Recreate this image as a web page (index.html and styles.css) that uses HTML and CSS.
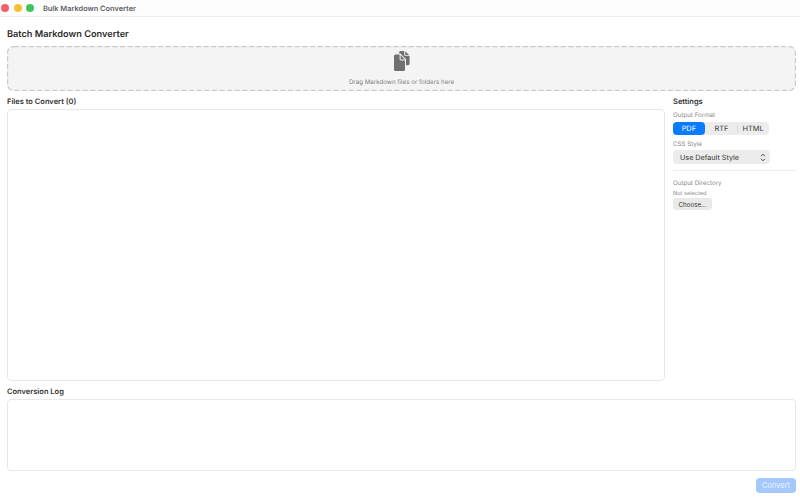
FILE: index.html
```html
<!DOCTYPE html>
<html lang="en">
<head>
<meta charset="utf-8">
<title>Bulk Markdown Converter</title>
<link rel="stylesheet" href="styles.css">
</head>
<body>
<div class="window">
  <header class="titlebar">
    <div class="lights">
      <span class="light red"></span>
      <span class="light yellow"></span>
      <span class="light green"></span>
    </div>
    <span class="window-title">Bulk Markdown Converter</span>
  </header>
  <main class="content">
    <h1 class="heading">Batch Markdown Converter</h1>
    <section class="dropzone">
      <svg class="dash" width="789" height="45" viewBox="0 0 789 45">
        <rect x="0.6" y="0.6" width="787.8" height="43.8" rx="6" fill="none" stroke="#c9c9c9" stroke-width="1.2" stroke-dasharray="5 2.6"/>
      </svg>
      <svg class="drop-icon" width="16" height="20" viewBox="0 0 16 20">
        <path fill="#707070" d="M6.6 0H10.2V3.6a1.5 1.5 0 0 0 1.5 1.5H15.6V12.8a1.4 1.4 0 0 1-1.4 1.4H12V8.2L6.4 2.4H5.2V1.4A1.4 1.4 0 0 1 6.6 0Z"/>
        <path fill="#707070" d="M11.2 .3L15.3 4.2H11.2Z"/>
        <path fill="#707070" d="M1.5 3.6H5.6V8a1.6 1.6 0 0 0 1.6 1.6H11V18.5A1.5 1.5 0 0 1 9.5 20H1.5A1.5 1.5 0 0 1 0 18.5V5.1A1.5 1.5 0 0 1 1.5 3.6Z"/>
        <path fill="#707070" d="M6.6 3.9L10.8 8.5H6.6Z"/>
      </svg>
      <span class="drop-text">Drag Markdown files or folders here</span>
    </section>
    <div class="middle">
      <section class="files">
        <h2 class="section-title">Files to Convert (0)</h2>
        <div class="panel files-panel"></div>
      </section>
      <aside class="settings">
        <h2 class="section-title">Settings</h2>
        <label class="field-label first">Output Format</label>
        <div class="segments">
          <span class="segment active">PDF</span>
          <span class="segment rtf">RTF</span>
          <span class="divider"></span>
          <span class="segment">HTML</span>
        </div>
        <label class="field-label css-label">CSS Style</label>
        <div class="select">
          <span>Use Default Style</span>
          <svg width="6" height="9" viewBox="0 0 6 9">
            <path d="M1 3.2L3 1.2l2 2M1 5.8l2 2 2-2" fill="none" stroke="#444" stroke-width="1"/>
          </svg>
        </div>
        <hr class="rule">
        <label class="field-label">Output Directory</label>
        <span class="not-selected">Not selected</span>
        <button class="choose" type="button">Choose...</button>
      </aside>
    </div>
    <section class="log">
      <h2 class="section-title">Conversion Log</h2>
      <div class="panel log-panel"></div>
    </section>
    <footer class="actions">
      <button class="convert" type="button">Convert</button>
    </footer>
  </main>
</div>
</body>
</html>
```
FILE: styles.css
```css
* { box-sizing: border-box; }
html, body { margin: 0; padding: 0; }
body {
  width: 800px;
  height: 500px;
  overflow: hidden;
  background: #fff;
  font-family: Inter, "Liberation Sans", sans-serif;
  color: #2a2a2a;
  text-rendering: geometricPrecision;
}
.window { display: flex; flex-direction: column; height: 500px; }
.titlebar {
  height: 17px;
  display: flex;
  align-items: center;
  border-bottom: 1px solid #ececec;
  background: #fdfdfd;
}
.lights { display: flex; gap: 4.7px; margin-left: 1px; }
.light { width: 8px; height: 8px; border-radius: 50%; }
.red { background: #f4606a; }
.yellow { background: #f7c033; }
.green { background: #3fc45c; }
.window-title { margin-left: 8.6px; font-size: 7.4px; font-weight: 600; color: #5e5e66; }
.content { flex: 1; display: flex; flex-direction: column; padding: 11px 4px 8px 7px; min-height: 0; }
.heading { margin: 0; font-size: 9.2px; line-height: 13px; font-weight: 600; color: #2b2b2b; }
.dropzone {
  position: relative;
  margin-top: 5px;
  height: 45px;
  flex: none;
  border-radius: 6px;
  background: #f4f4f4;
  display: flex;
  flex-direction: column;
  align-items: center;
  padding-top: 5px;
  gap: 7px;
}
.dash { position: absolute; left: 0; top: 0; }
.drop-icon { display: block; margin-left: 1px; }
.drop-text { font-size: 6.2px; line-height: 9px; color: #7c7c7c; }
.middle { display: flex; margin-top: 6px; gap: 8px; height: 284px; flex: none; }
.files { width: 658px; flex: none; display: flex; flex-direction: column; }
.section-title { margin: 0; font-size: 7.5px; line-height: 10px; font-weight: 600; color: #333; }
.panel { border: 1px solid #e8e8e8; border-radius: 4px; background: #fff; }
.files-panel { flex: 1; margin-top: 2px; }
.settings { flex: 1; display: flex; flex-direction: column; align-items: flex-start; }
.field-label { font-size: 6.2px; line-height: 8px; color: #858585; }
.first { margin-top: 5px; }
.css-label { margin-top: 6px; }
.segments {
  display: flex;
  align-items: center;
  margin-top: 2px;
  width: 96px;
  height: 13px;
  background: #ececec;
  border-radius: 4px;
}
.segment { width: 32px; height: 13px; font-size: 7.4px; line-height: 13px; text-align: center; color: #3a3a3a; }
.segment.active { background: #0a7aff; color: #fff; border-radius: 4px; }
.rtf { margin-left: 1px; }
.divider { width: 1px; height: 8px; background: #d8d8d8; margin-right: -1px; }
.select {
  margin-top: 1px;
  width: 97px;
  height: 14px;
  background: #ececec;
  border-radius: 4px;
  padding: 0 4px 0 7px;
  display: flex;
  align-items: center;
  justify-content: space-between;
  font-size: 7.2px;
  color: #333;
}
.rule { width: 100%; margin: 6px 0 9px; border: 0; border-top: 1px solid #ececec; }
.not-selected { font-size: 5.6px; line-height: 8px; margin-top: 2px; color: #8a8a8a; }
.choose {
  margin-top: 0;
  width: 39px;
  height: 12px;
  padding: 0;
  border: 0;
  border-radius: 3px;
  background: #e9e9e9;
  font-family: inherit;
  font-size: 6.2px;
  color: #333;
}
.log { margin-top: 6px; display: flex; flex-direction: column; }
.log-panel { margin-top: 2px; height: 72px; }
.actions { display: flex; justify-content: flex-end; margin-top: 7px; }
.convert {
  width: 40px;
  height: 15px;
  padding: 0;
  border: 0;
  border-radius: 4px;
  background: #a3c8fb;
  color: #e9f2ff;
  font-family: inherit;
  font-size: 7.5px;
}
```
